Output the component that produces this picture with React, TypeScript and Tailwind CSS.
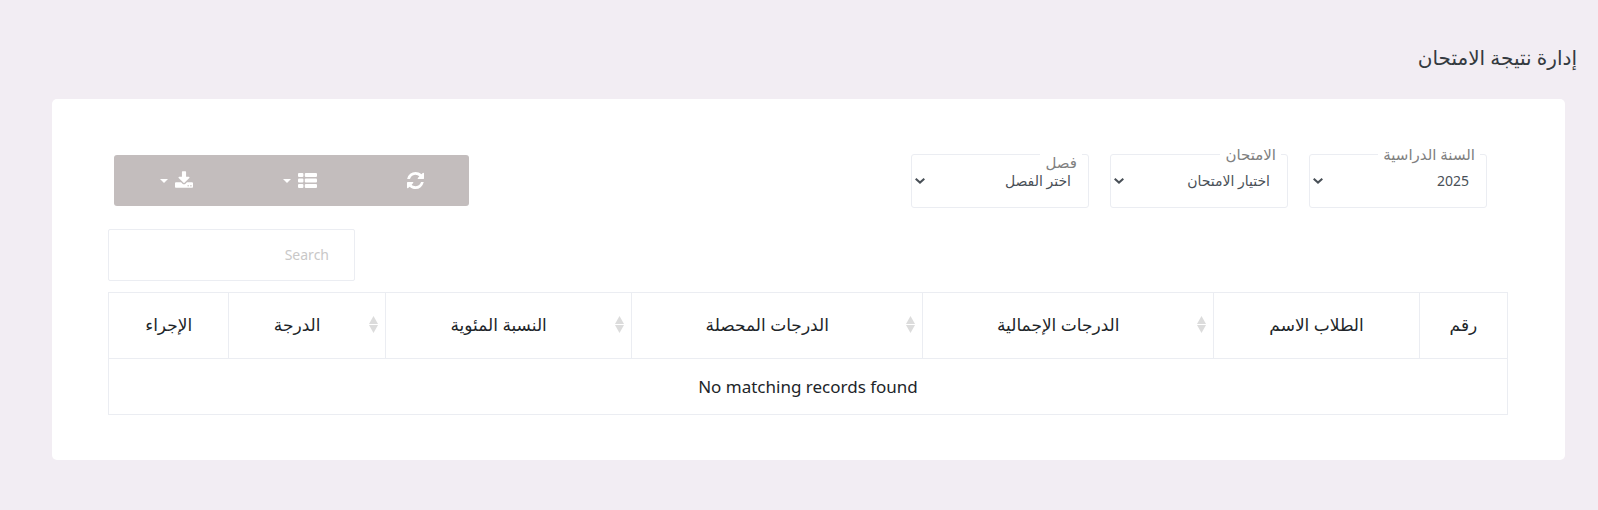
import React from 'react';

const filters = [
  { id: 'session', label: 'السنة الدراسية', value: '2025', labelTop: '-top-3' },
  { id: 'exam', label: 'الامتحان', value: 'اختيار الامتحان', labelTop: '-top-3' },
  { id: 'class', label: 'فصل', value: 'اختر الفصل', labelTop: '-top-1' },
];

const columns = [
  { title: 'رقم', width: 'w-[6.3%]', sortable: false },
  { title: 'الطلاب الاسم', width: 'w-[14.7%]', sortable: false },
  { title: 'الدرجات الإجمالية', width: 'w-[20.8%]', sortable: true },
  { title: 'الدرجات المحصلة', width: 'w-[20.8%]', sortable: true },
  { title: 'النسبة المئوية', width: 'w-[17.6%]', sortable: true },
  { title: 'الدرجة', width: 'w-[11.2%]', sortable: true },
  { title: 'الإجراء', width: 'w-[8.6%]', sortable: false },
];

function RefreshIcon() {
  return (
    <svg viewBox="0 0 1536 1536" className="h-[17px] w-[17px]" fill="currentColor" aria-hidden="true">
      <path d="M1511 928q0 5-1 7-64 268-268 434.5t-478 166.5q-146 0-282.5-55t-243.5-157l-129 129q-19 19-45 19t-45-19-19-45v-448q0-26 19-45t45-19h448q26 0 45 19t19 45-19 45l-137 137q71 66 161 102t187 36q134 0 250-65t186-179q11-17 53-117 8-23 30-23h192q13 0 22.5 9.5t9.5 22.5zm25-800v448q0 26-19 45t-45 19h-448q-26 0-45-19t-19-45 19-45l138-138q-148-137-349-137-134 0-250 65t-186 179q-11 17-53 117-8 23-30 23h-199q-13 0-22.5-9.5t-9.5-22.5v-7q65-268 270-434.5t480-166.5q146 0 284 55.5t245 156.5l130-129q19-19 45-19t45 19 19 45z" />
    </svg>
  );
}

function ListIcon() {
  return (
    <svg viewBox="0 0 1792 1408" className="h-[15px] w-[19px]" fill="currentColor" aria-hidden="true">
      <rect x="0" y="0" width="512" height="384" rx="96" />
      <rect x="640" y="0" width="1152" height="384" rx="96" />
      <rect x="0" y="512" width="512" height="384" rx="96" />
      <rect x="640" y="512" width="1152" height="384" rx="96" />
      <rect x="0" y="1024" width="512" height="384" rx="96" />
      <rect x="640" y="1024" width="1152" height="384" rx="96" />
    </svg>
  );
}

function DownloadIcon() {
  return (
    <svg viewBox="64 0 1664 1536" className="mb-0.5 h-[17px] w-[18px]" fill="currentColor" aria-hidden="true">
      <path d="M1344 1344q0-26-19-45t-45-19-45 19-19 45 19 45 45 19 45-19 19-45zm256 0q0-26-19-45t-45-19-45 19-19 45 19 45 45 19 45-19 19-45zm128-224v320q0 40-28 68t-68 28h-1472q-40 0-68-28t-28-68v-320q0-40 28-68t68-28h465l135 136q58 56 136 56t136-56l136-136h464q40 0 68 28t28 68zm-325-569q17 41-14 70l-448 448q-18 19-45 19t-45-19l-448-448q-31-29-14-70 17-39 59-39h256v-448q0-26 19-45t45-19h256q26 0 45 19t19 45v448h256q42 0 59 39z" />
    </svg>
  );
}

function Caret() {
  return (
    <svg viewBox="0 0 8 4" className="h-1 w-2" fill="currentColor" aria-hidden="true">
      <path d="M0 0h8L4 4z" />
    </svg>
  );
}

function SortIcon() {
  return (
    <svg viewBox="0 0 9 17" className="h-[17px] w-[9px] text-[#dcdcdc]" fill="currentColor" aria-hidden="true">
      <path d="M4.5 0L9 8H0zM0 9h9l-4.5 8z" />
    </svg>
  );
}

export default function App() {
  return (
    <div
      dir="rtl"
      className="min-h-screen bg-[#f2edf3] pt-11 pb-12 pr-[21px] font-['Noto_Sans','DejaVu_Sans',sans-serif] text-[#212529]"
    >
      <h3 className="text-xl leading-7 text-[#343a40]">إدارة نتيجة الامتحان</h3>

      <div className="mt-[27px] mr-3 ml-[52px] rounded-[5px] bg-white pt-[55px] pb-[45px] pr-[57px] pl-14">
        <div className="flex items-start justify-between pr-[21px] pl-1.5">
          <div className="flex gap-[21px]">
            {filters.map((filter) => (
              <div key={filter.id} className="relative w-[178px]">
                <label
                  htmlFor={filter.id}
                  className={`absolute right-[7px] ${filter.labelTop} bg-white px-[5px] text-[15px] leading-6 text-[#80807f]`}
                >
                  {filter.label}
                </label>
                <select
                  id={filter.id}
                  className="block h-[54px] w-full appearance-none rounded-[3px] border border-[#ebedf2] bg-white pr-[17px] pl-6 text-sm text-[#495057]"
                >
                  <option>{filter.value}</option>
                </select>
                <svg
                  viewBox="0 0 10 6"
                  className="pointer-events-none absolute top-6 left-1 h-1.5 w-2.5"
                  fill="none"
                  stroke="#495057"
                  strokeWidth="2"
                  aria-hidden="true"
                >
                  <path d="M0.7 0.8L5 4.6l4.3-3.8" />
                </svg>
              </div>
            ))}
          </div>

          <div className="mt-px flex h-[51px] overflow-hidden rounded-[3px] bg-[#c3bdbd] text-white">
            <button type="button" title="Refresh" className="flex w-[107px] items-center justify-center">
              <RefreshIcon />
            </button>
            <button type="button" title="Columns" className="flex w-[124px] items-center justify-center gap-[7px]">
              <ListIcon />
              <Caret />
            </button>
            <button type="button" title="Export" className="flex w-[124px] items-center justify-center gap-[7px]">
              <DownloadIcon />
              <Caret />
            </button>
          </div>
        </div>

        <div className="mt-[21px] flex justify-end">
          <input
            type="search"
            placeholder="Search"
            aria-label="Search"
            className="h-[52px] w-[247px] rounded-[2px] border border-[#ebedf2] px-[25px] pb-0.5 text-sm placeholder:text-[#c9c8c8]"
          />
        </div>

        <table className="mt-[11px] w-full table-fixed border-collapse border border-[#ebedf2] text-center text-[17px]">
          <thead>
            <tr className="h-[66px]">
              {columns.map((col) => (
                <th key={col.title} className={`${col.width} border border-[#ebedf2] px-0 pt-0 pb-0.5 font-normal`}>
                  {col.sortable ? (
                    <button type="button" className="flex w-full items-center pr-[7px]">
                      <SortIcon />
                      <span className="flex-1 pr-1">{col.title}</span>
                    </button>
                  ) : (
                    col.title
                  )}
                </th>
              ))}
            </tr>
          </thead>
          <tbody>
            <tr className="h-14">
              <td colSpan={columns.length}>No matching records found</td>
            </tr>
          </tbody>
        </table>
      </div>
    </div>
  );
}
